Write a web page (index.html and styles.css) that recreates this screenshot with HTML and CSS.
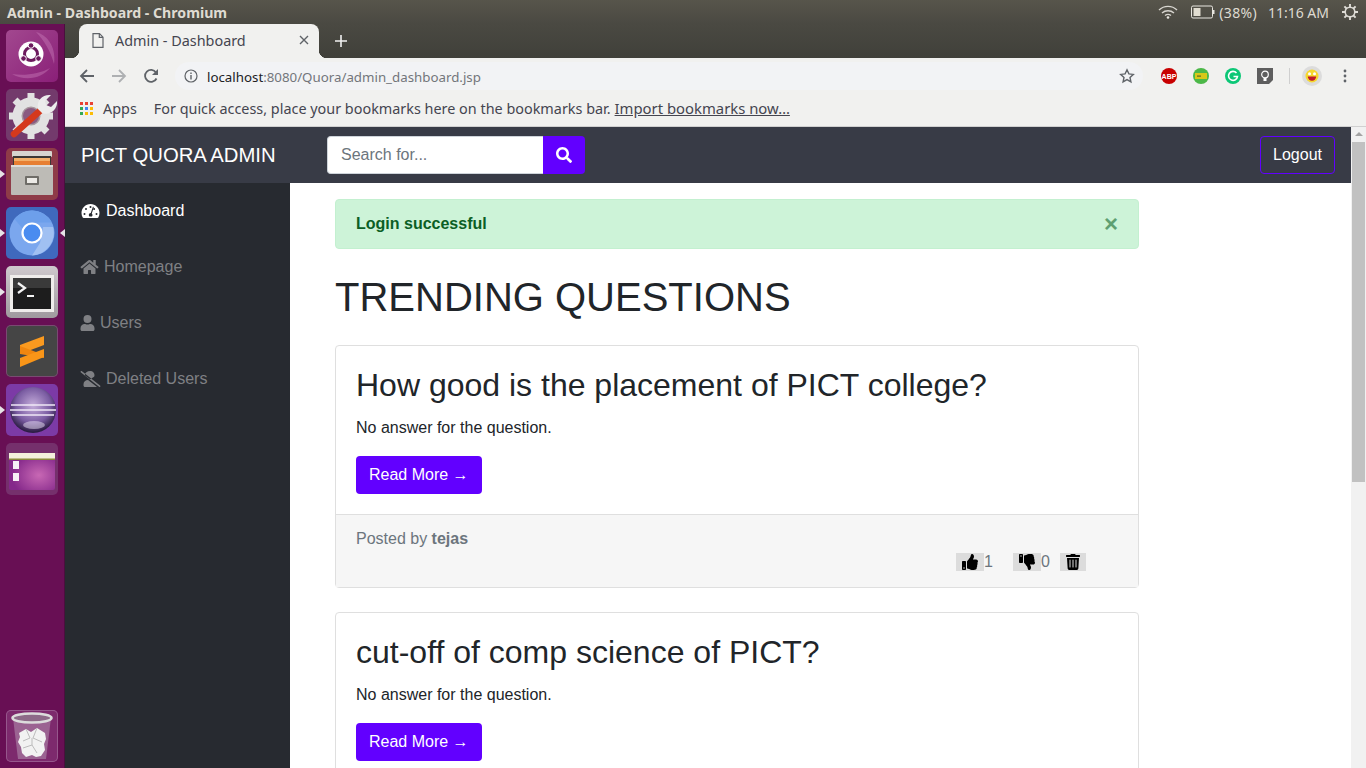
FILE: index.html
```html
<!DOCTYPE html>
<html lang="en">
<head>
    <meta charset="UTF-8">
    <title>Admin - Dashboard</title>
    <link rel="stylesheet" href="styles.css">
</head>
<body>
    <svg class="sprites" width="0" height="0">
        <symbol id="i-thumb-up" viewBox="0 0 512 512"><path id="thumb-shape" d="M104 224H24c-13.255 0-24 10.745-24 24v240c0 13.255 10.745 24 24 24h80c13.255 0 24-10.745 24-24V248c0-13.255-10.745-24-24-24zM64 472c-13.255 0-24-10.745-24-24s10.745-24 24-24 24 10.745 24 24-10.745 24-24 24zM384 81.452c0 42.416-25.97 66.208-33.277 94.548h101.723c33.397 0 59.397 27.746 59.553 58.098.084 17.938-7.546 37.249-19.439 49.197l-.11.11c9.836 23.337 8.237 56.037-9.308 79.469 8.681 25.895-.069 57.704-16.382 74.757 4.298 17.598 2.244 32.575-6.148 44.632C440.202 511.587 389.616 512 346.839 512l-2.845-.001c-48.287-.017-87.806-17.598-119.56-31.725-15.957-7.099-36.821-15.887-52.651-16.178-6.54-.12-11.783-5.457-11.783-11.998v-213.77c0-3.2 1.282-6.271 3.558-8.521 39.614-39.144 56.648-80.587 89.117-113.111 14.804-14.832 20.188-37.236 25.393-58.902C282.515 39.293 291.817 0 312 0c24 0 72 8 72 81.452z"/></symbol>
        <symbol id="i-thumb-down" viewBox="0 0 512 512"><use href="#thumb-shape" transform="matrix(1 0 0 -1 0 512)"/></symbol>
        <symbol id="i-trash" viewBox="0 0 448 512"><path d="M432 32H312l-9-19A24 24 0 0 0 281 0H167a24 24 0 0 0-22 13l-9 19H16C7 32 0 39 0 48v32c0 9 7 16 16 16h416c9 0 16-7 16-16V48c0-9-7-16-16-16zM53 467a48 48 0 0 0 48 45h246a48 48 0 0 0 48-45l21-339H32zm251-275a16 16 0 0 1 32 0v224a16 16 0 0 1-32 0zm-96 0a16 16 0 0 1 32 0v224a16 16 0 0 1-32 0zm-96 0a16 16 0 0 1 32 0v224a16 16 0 0 1-32 0z"/></symbol>
    </svg>

    <div class="system-bar">
        <span class="window-title">Admin - Dashboard - Chromium</span>
        <div class="tray">
            <svg class="tray-wifi" viewBox="0 0 20 14"><path d="M1 5a13 13 0 0 1 18 0M4 8a9 9 0 0 1 12 0M7 10.5a5 5 0 0 1 6 0" fill="none" stroke="#d8d6d0" stroke-width="1.4"/><circle cx="10" cy="12.5" r="1.3" fill="#e8e6e0"/></svg>
            <svg class="tray-battery" viewBox="0 0 24 14"><rect x=".5" y="1" width="21" height="12" rx="1.5" fill="none" stroke="#e8e6e0"/><rect x="2.5" y="3" width="7" height="8" fill="#e0dcd0"/><rect x="22" y="5" width="1.5" height="4" fill="#e8e6e0"/></svg>
            <span class="tray-percent">(38%)</span>
            <span class="tray-clock">11:16 AM</span>
            <svg class="tray-gear" viewBox="0 0 20 20"><circle cx="10" cy="10" r="6" fill="none" stroke="#dedcd6" stroke-width="2"/><path d="M10 0v5M10 15v5M0 10h5M15 10h5M3 3l3 3M14 14l3 3M17 3l-3 3M6 14l-3 3" stroke="#dedcd6" stroke-width="2.4"/></svg>
        </div>
    </div>

    <div class="desktop">
        <!-- launcher on the left -->
        <nav class="launcher">
            <div class="launcher-top">
                <div class="tile tile-ubuntu">
                    <svg viewBox="0 0 52 52"><path d="M30 2c14 4 20 18 18 32-3-12-10-24-18-32zM6 44c14 8 30 4 38-6-10 6-26 8-38 6z" fill="#c77ab8" opacity=".45"/><circle cx="25" cy="24" r="12.5" fill="#fff"/><circle cx="25" cy="24" r="6.5" fill="none" stroke="#6d1a5e" stroke-width="3"/><circle cx="25" cy="15.5" r="2.8" fill="#6d1a5e" stroke="#fff"/><circle cx="17.500" cy="28.500" r="2.8" fill="#6d1a5e" stroke="#fff"/><circle cx="32.500" cy="28.500" r="2.8" fill="#6d1a5e" stroke="#fff"/></svg>
                </div>
                <div class="tile tile-tools">
                    <svg viewBox="0 0 52 52"><circle cx="25" cy="27" r="14" fill="#a8989f" stroke="#e2e2e2" stroke-width="9"/><path d="M25 4v9M25 41v9M3 27h9M38 27h9M9 11l6 6M35 37l6 6M41 11l-6 6M15 37l-6 6" stroke="#e2e2e2" stroke-width="7"/><circle cx="25" cy="27" r="8" fill="#8a5a80"/><path d="M8 45 36 20" stroke="#d5391d" stroke-width="6.500" stroke-linecap="round"/><path d="M32 20c-2-9 5-15 13-14l-6 6 1 4 5 2 6-6c1 9-8 15-15 12z" fill="#ececec"/></svg>
                </div>
                <div class="tile tile-files has-pip">
                    <svg viewBox="0 0 52 52"><rect x="6" y="3" width="40" height="6" rx="1" fill="#d6d4cf"/><rect x="7" y="8" width="38" height="12" fill="#3b3835"/><rect x="8" y="10" width="36" height="3" fill="#f3b06a"/><rect x="8" y="13" width="36" height="4" fill="#e77f32"/><rect x="5" y="17" width="42" height="30" rx="1" fill="#bdbbb6"/><rect x="5" y="17" width="42" height="2" fill="#dedcd8"/><rect x="19" y="28" width="14" height="9" rx="1" fill="#6f6d68"/><rect x="21" y="30" width="10" height="5" fill="#eceae6"/></svg>
                </div>
                <div class="tile tile-chromium has-pip has-pip-right">
                    <svg viewBox="0 0 52 52"><circle cx="26" cy="26" r="22.5" fill="#7ba7ee"/><path d="M26 3.5A22.5 22.5 0 0 1 46 15.500H26a10.500 10.500 0 0 0-9.500 6L8.500 12A22.5 22.5 0 0 1 26 3.500z" fill="#6d9feb"/><path d="M34 36 26 48.500A22.500 22.500 0 0 0 47 20H37z" fill="#a0c0f2"/><circle cx="26" cy="26" r="9.500" fill="#4a8cf0" stroke="#fff" stroke-width="2.200"/></svg>
                </div>
                <div class="tile tile-terminal has-pip">
                    <svg viewBox="0 0 52 52"><rect x="4" y="9" width="44" height="37" fill="#efedeb"/><rect x="7" y="12" width="38" height="31" fill="#1d1d1d"/><rect x="7" y="12" width="38" height="10" fill="#3a3a3a"/><path d="M12 17l7 5-7 5" fill="none" stroke="#f4f4f4" stroke-width="2.200"/><rect x="21" y="29" width="7" height="2" fill="#f4f4f4"/></svg>
                </div>
                <div class="tile tile-sublime">
                    <svg viewBox="0 0 52 52"><path d="M38 11 14 20v9l24-9z" fill="#fb9a1f"/><path d="M14 21l24 9v3L14 29z" fill="#f0860f"/><path d="M38 24v8L14 42v-9z" fill="#f99518"/></svg>
                </div>
                <div class="tile tile-eclipse has-pip">
                    <svg viewBox="0 0 52 52"><defs><radialGradient id="orb" cx="50%" cy="40%" r="58%"><stop offset="0" stop-color="#c4acda"/><stop offset=".65" stop-color="#7a5ca2"/><stop offset="1" stop-color="#2c1d44"/></radialGradient></defs><circle cx="27" cy="26" r="23" fill="url(#orb)"/><path d="M5 21h44M4 26h46M6 31h42" stroke="#efe8f6" stroke-width="1.600"/><ellipse cx="28" cy="41" rx="11" ry="4" fill="#e8dff2" opacity=".5"/></svg>
                </div>
                <div class="tile tile-window">
                    <svg viewBox="0 0 52 52"><defs><radialGradient id="glow" cx="65%" cy="60%" r="60%"><stop offset="0" stop-color="#c868b4"/><stop offset="1" stop-color="#84288a"/></radialGradient></defs><rect x="3" y="10" width="46" height="37" rx="2" fill="url(#glow)"/><rect x="3" y="10" width="46" height="6" fill="#f4f1dc"/><rect x="3" y="15.500" width="46" height="1.500" fill="#8a8a3a"/><rect x="7" y="18" width="6" height="8" fill="#f6eff6"/><rect x="7" y="30" width="6" height="8" fill="#f6eff6"/></svg>
                </div>
            </div>
            <div class="tile tile-trash">
                <svg viewBox="0 0 52 52"><path d="M7 8 12 49h28l5-41z" fill="#b591b0" opacity=".55"/><ellipse cx="26" cy="8" rx="19.500" ry="4.500" fill="#8d6a88" stroke="#dcdcdc" stroke-width="2.600"/><path d="M13 23l7-4 5 3 6-4 8 5 1 6-2 5 1 6-4 6-5 1-4-2-6 2-4-4-1-6-3-5 2-5z" fill="#f2f2f2"/><path d="M20 19l4 9-7 3M31 18l-4 10 9 4M17 38l9-3 5 8M26 28v7" fill="none" stroke="#bcbcbc" stroke-width="1"/></svg>
            </div>
        </nav>

        <div class="browser">
            <div class="tab-strip">
                <div class="tab">
                    <svg class="tab-file" viewBox="0 0 12 15"><path d="M1 .7h6.500L11 4.200v10.100H1zM7.300 .7v3.700H11" fill="none" stroke="#5f6368" stroke-width="1.200"/></svg>
                    <span class="tab-title">Admin - Dashboard</span>
                    <svg class="tab-close" viewBox="0 0 10 10"><path d="M1 1l8 8M9 1l-8 8" stroke="#5f6368" stroke-width="1.400"/></svg>
                </div>
                <svg class="new-tab" viewBox="0 0 12 12"><path d="M6 0v12M0 6h12" stroke="#f1f1f1" stroke-width="1.600"/></svg>
            </div>

            <div class="toolbar">
                <svg class="tool-icon" viewBox="0 0 16 16"><path d="M15 8H2M8 2 2 8l6 6" fill="none" stroke="#5f6368" stroke-width="1.800"/></svg>
                <svg class="tool-icon" viewBox="0 0 16 16"><path d="M1 8h13M8 2l6 6-6 6" fill="none" stroke="#aeb0b2" stroke-width="1.800"/></svg>
                <svg class="tool-icon tool-reload" viewBox="0 0 16 16"><path d="M13.500 10.500A6 6 0 1 1 13 4.500" fill="none" stroke="#5f6368" stroke-width="1.800"/><path d="M15 1v6H9z" fill="#5f6368"/></svg>
                <div class="omnibox">
                    <svg class="info-icon" viewBox="0 0 14 14"><circle cx="7" cy="7" r="6" fill="none" stroke="#5f6368" stroke-width="1.200"/><path d="M7 6v4.500M7 3.500v1.500" stroke="#5f6368" stroke-width="1.400"/></svg>
                    <span class="url"><span class="url-host">localhost</span>:8080/Quora/admin_dashboard.jsp</span>
                    <svg class="star" viewBox="0 0 16 16"><path d="M8 1.800l1.900 4.100 4.400.5-3.300 3 .9 4.400L8 11.600l-3.900 2.200.9-4.400-3.300-3 4.400-.5z" fill="none" stroke="#5f6368" stroke-width="1.400"/></svg>
                </div>
                <div class="extensions">
                    <svg class="ext" viewBox="0 0 16 16"><circle cx="8" cy="8" r="8" fill="#c80000"/><text x="8" y="10.500" class="ext-abp">ABP</text></svg>
                    <svg class="ext" viewBox="0 0 16 16"><circle cx="8" cy="8" r="8" fill="#4cb848"/><rect x="2" y="5" width="12" height="6" fill="#d8c818"/><rect x="4" y="7.500" width="4" height="1.200" fill="#5a6a20"/></svg>
                    <svg class="ext" viewBox="0 0 16 16"><circle cx="8" cy="8" r="8" fill="#0cc776"/><path d="M11.500 5A4.500 4.500 0 1 0 12.500 8.500H8.500" fill="none" stroke="#fff" stroke-width="1.600"/></svg>
                    <svg class="ext" viewBox="0 0 16 16"><path d="M0 0h16v12l-4 4H0z" fill="#5e5e5e"/><circle cx="8" cy="6.500" r="3.300" fill="none" stroke="#fff" stroke-width="1.200"/><rect x="6.500" y="10" width="3" height="3" fill="#fff"/></svg>
                    <span class="ext-sep"></span>
                    <span class="avatar">
                        <svg viewBox="0 0 14 14"><circle cx="7" cy="7" r="6.500" fill="#f6d82e"/><circle cx="4.500" cy="4.800" r="1.500" fill="#fff"/><circle cx="9.500" cy="4.800" r="1.500" fill="#fff"/><path d="M2.800 7.500h8.400A4.200 4.200 0 0 1 2.800 7.500z" fill="#c01a2a"/></svg>
                    </span>
                    <svg class="menu-dots" viewBox="0 0 4 14"><circle cx="2" cy="2" r="1.400" fill="#5f6368"/><circle cx="2" cy="7" r="1.400" fill="#5f6368"/><circle cx="2" cy="12" r="1.400" fill="#5f6368"/></svg>
                </div>
            </div>

            <div class="bookmarks">
                <svg class="apps-icon" viewBox="0 0 13 13"><rect width="3" height="3" fill="#e94235"/><rect x="5" width="3" height="3" fill="#e94235"/><rect x="10" width="3" height="3" fill="#e94235"/><rect y="5" width="3" height="3" fill="#34a853"/><rect x="5" y="5" width="3" height="3" fill="#4285f4"/><rect x="10" y="5" width="3" height="3" fill="#fbbc05"/><rect y="10" width="3" height="3" fill="#34a853"/><rect x="5" y="10" width="3" height="3" fill="#fbbc05"/><rect x="10" y="10" width="3" height="3" fill="#fbbc05"/></svg>
                <span class="apps-label">Apps</span>
                <span class="bookmarks-hint">For quick access, place your bookmarks here on the bookmarks bar.</span>
                <a class="bookmarks-import" href="#">Import bookmarks now…</a>
            </div>

            <div class="viewport">
                <div class="page">
                    <header class="navbar">
                        <a class="brand" href="#">PICT QUORA ADMIN</a>
                        <form class="search">
                            <input class="search-input" type="text" placeholder="Search for...">
                            <button class="search-btn" type="button">
                                <svg viewBox="0 0 512 512"><path d="M505 442.700 405.300 343c-4.500-4.500-10.600-7-17-7H372c27.600-35.300 44-79.700 44-128C416 93.100 322.900 0 208 0S0 93.100 0 208s93.100 208 208 208c48.300 0 92.700-16.400 128-44v16.300c0 6.400 2.500 12.500 7 17l99.700 99.700c9.400 9.400 24.600 9.400 33.900 0l28.300-28.300c9.400-9.400 9.400-24.600.1-34zM208 336c-70.700 0-128-57.200-128-128 0-70.700 57.200-128 128-128 70.700 0 128 57.200 128 128 0 70.700-57.200 128-128 128z"/></svg>
                            </button>
                        </form>
                        <a class="logout" href="#">Logout</a>
                    </header>

                    <div class="layout">
                        <aside class="sidebar">
                            <a class="side-link active" href="#">
                                <svg viewBox="0 0 576 512"><path d="M288 32C129 32 0 161 0 320c0 53 14 102 39 144 6 10 16 16 28 16h442c12 0 22-6 28-16 25-42 39-91 39-144C576 161 447 32 288 32zm0 64a32 32 0 1 1 0 64 32 32 0 0 1 0-64zM96 384a32 32 0 1 1 0-64 32 32 0 0 1 0 64zm48-160a32 32 0 1 1 0-64 32 32 0 0 1 0 64zm246-72-61 184c14 11 23 29 23 48 0 17-7 33-18 45H252c-11-12-18-28-18-45 0-35 28-64 63-64l62-187c3-9 12-14 21-11 9 3 14 12 11 21zm14 72a32 32 0 1 1 32-32c0 0 0 0 0 0a32 32 0 0 1-32 32zm76 160a32 32 0 1 1 0-64 32 32 0 0 1 0 64z"/></svg>
                                Dashboard
                            </a>
                            <a class="side-link" href="#">
                                <svg class="icon-home" viewBox="0 0 576 512"><path d="M280 148 96 300v164c0 9 7 16 16 16l112-1c9 0 16-7 16-16v-95c0-9 7-16 16-16h64c9 0 16 7 16 16v95c0 9 7 16 16 16l112 1c9 0 16-7 16-16V300L296 148c-4-4-12-4-16 0zm291 103-83-69V44c0-7-5-12-12-12h-56c-7 0-12 5-12 12v72l-90-74a48 48 0 0 0-61 0L5 251c-5 4-6 12-2 17l26 31c4 5 12 6 17 2L280 108c4-4 12-4 16 0l235 193c5 4 13 3 17-2l25-31c4-5 3-13-2-17z"/></svg>
                                Homepage
                            </a>
                            <a class="side-link" href="#">
                                <svg class="icon-user" viewBox="0 0 448 512"><path d="M224 256a128 128 0 1 0 0-256 128 128 0 0 0 0 256zm90 32h-17a174 174 0 0 1-146 0h-17C60 288 0 348 0 422v42c0 27 21 48 48 48h352c27 0 48-21 48-48v-42c0-74-60-134-134-134z"/></svg>
                                Users
                            </a>
                            <a class="side-link" href="#">
                                <svg viewBox="0 0 640 512"><path d="M633 471 36 3a16 16 0 0 0-23 3L3 18c-5 7-4 17 3 23l597 468c7 5 17 4 23-3l10-13c5-7 4-16-3-22zM320 256c-12 0-23-2-34-6L141 137c2-76 65-137 179-137 71 0 128 57 128 128 0 20-5 39-13 56zM96 422v42c0 27 21 48 48 48h352c9 0 18-3 25-7L241 288c-81 0-145 60-145 134z"/></svg>
                                Deleted Users
                            </a>
                        </aside>

                        <main class="content">
                            <div class="alert">
                                <strong>Login successful</strong>
                                <span class="alert-close">×</span>
                            </div>
                            <h1 class="page-title">TRENDING QUESTIONS</h1>

                            <article class="card">
                                <div class="card-body">
                                    <h2 class="card-title">How good is the placement of PICT college?</h2>
                                    <p class="card-text">No answer for the question.</p>
                                    <a class="read-more" href="#">Read More →</a>
                                </div>
                                <div class="card-footer">
                                    <div class="posted">Posted by <b>tejas</b></div>
                                    <div class="votes">
                                        <span class="vote"><svg><use href="#i-thumb-up"/></svg></span><span class="count">1</span>
                                        <span class="vote vote-down"><svg><use href="#i-thumb-down"/></svg></span><span class="count">0</span>
                                        <span class="vote vote-trash"><svg><use href="#i-trash"/></svg></span>
                                    </div>
                                </div>
                            </article>

                            <article class="card">
                                <div class="card-body">
                                    <h2 class="card-title">cut-off of comp science of PICT?</h2>
                                    <p class="card-text">No answer for the question.</p>
                                    <a class="read-more" href="#">Read More →</a>
                                </div>
                            </article>
                        </main>
                    </div>
                </div>

                <div class="scrollbar">
                    <span class="scroll-arrow"></span>
                    <span class="scroll-thumb"></span>
                </div>
            </div>
        </div>
    </div>
</body>
</html>
```

FILE: styles.css
```css
* {
    box-sizing: border-box;
}

html, body {
    margin: 0;
    padding: 0;
    height: 768px;
    overflow: hidden;
}

body {
    display: flex;
    flex-direction: column;
    font-family: "Liberation Sans", Arial, sans-serif;
    font-size: 16px;
    color: #212529;
    background-color: #3c3b37;
}

a {
    text-decoration: none;
}

.sprites {
    position: absolute;
}

/* Ubuntu top panel */
.system-bar {
    height: 24px;
    flex: none;
    display: flex;
    align-items: center;
    justify-content: space-between;
    padding: 0 0 0 7px;
    background: linear-gradient(#57554b, #4a4942);
    color: #dfdbd2;
}

.window-title {
    font-family: "Noto Sans", sans-serif;
    font-weight: 700;
    font-size: 14.15px;
}

.tray {
    display: flex;
    align-items: center;
    font-family: "Noto Sans", sans-serif;
    font-size: 14px;
}

.tray-wifi {
    width: 20px;
    height: 14px;
    margin-right: 13px;
}

.tray-battery {
    width: 24px;
    height: 14px;
    margin-right: 4px;
}

.tray-percent {
    margin-right: 11px;
    letter-spacing: .3px;
}

.tray-clock {
    margin-right: 13px;
}

.tray-gear {
    width: 16px;
    height: 16px;
    margin-right: 8px;
}

.desktop {
    flex: 1;
    display: flex;
    min-height: 0;
}

/* Launcher */
.launcher {
    width: 65px;
    flex: none;
    display: flex;
    flex-direction: column;
    justify-content: space-between;
    padding: 6px 7px 6px 6px;
    background-color: #680f54;
    border-right: 1px solid #4a0f3e;
}

.launcher-top {
    display: flex;
    flex-direction: column;
    gap: 7px;
}

.tile {
    position: relative;
    width: 52px;
    height: 52px;
    border-radius: 5px;
}

.tile svg {
    display: block;
    width: 52px;
    height: 52px;
}

.has-pip::before {
    content: "";
    position: absolute;
    left: -6px;
    top: 22px;
    border-left: 5px solid #e6e3e6;
    border-top: 4px solid transparent;
    border-bottom: 4px solid transparent;
}

.has-pip-right::after {
    content: "";
    position: absolute;
    right: -7px;
    top: 22px;
    border-right: 5px solid #e6e3e6;
    border-top: 4px solid transparent;
    border-bottom: 4px solid transparent;
}

.tile-ubuntu { background: linear-gradient(135deg, #a2488f, #8a1f78); }
.tile-tools { background-color: #733a6c; }
.tile-files { background-color: #8e3b48; }
.tile-chromium { background-color: #3f69bd; }
.tile-terminal { background: linear-gradient(#cfc9cd, #9f9a9e); }
.tile-sublime { background-color: #454545; box-shadow: inset 0 0 0 1px #7a4a72; }
.tile-eclipse { background-color: #7c3aa6; }
.tile-window { background-color: #75306c; }
.tile-trash { background-color: #7d2a6d; box-shadow: inset 0 0 0 1px #96578c; }

/* Browser chrome */
.browser {
    flex: 1;
    min-width: 0;
    display: flex;
    flex-direction: column;
}

.tab-strip {
    height: 34px;
    flex: none;
    display: flex;
    align-items: flex-end;
    padding-left: 14px;
    background: linear-gradient(#4a4942, #40403a);
}

.tab {
    position: relative;
    width: 240px;
    height: 34px;
    display: flex;
    align-items: center;
    padding: 0 10px 2px 13px;
    background-color: #f1f1ef;
    border-radius: 8px 8px 0 0;
}

/* flared bottom corners of the active tab */
.tab::before,
.tab::after {
    content: "";
    position: absolute;
    bottom: 0;
    width: 8px;
    height: 8px;
    background: radial-gradient(circle at 0 0, transparent 8px, #f1f1ef 8.5px);
}

.tab::before {
    left: -8px;
}

.tab::after {
    right: -8px;
    background: radial-gradient(circle at 100% 0, transparent 8px, #f1f1ef 8.5px);
}

.tab-file {
    width: 12px;
    height: 15px;
    margin-right: 11px;
}

.tab-title {
    flex: 1;
    font-family: "Noto Sans", sans-serif;
    font-size: 14.4px;
    color: #45454f;
}

.tab-close {
    width: 10px;
    height: 10px;
}

.new-tab {
    width: 12px;
    height: 12px;
    margin: 0 0 11px 16px;
}

.toolbar {
    height: 36px;
    flex: none;
    display: flex;
    align-items: center;
    padding-left: 14px;
    background-color: #f1f1ef;
}

.tool-icon {
    width: 16px;
    height: 16px;
    margin-right: 16px;
}

.tool-reload {
    margin-right: 0;
}

.omnibox {
    width: 968px;
    height: 28px;
    margin-left: 16px;
    display: flex;
    align-items: center;
    padding: 0 8px 0 9px;
    border-radius: 14px;
    background-color: #f2f3f5;
}

.info-icon {
    width: 14px;
    height: 14px;
    margin-right: 9px;
}

.url {
    flex: 1;
    padding-top: 1px;
    font-family: "Noto Sans", sans-serif;
    font-size: 13.3px;
    color: #72767b;
}

.url-host {
    color: #202124;
}

.star {
    width: 16px;
    height: 16px;
}

.extensions {
    display: flex;
    align-items: center;
    margin-left: 18px;
}

.ext {
    width: 16px;
    height: 16px;
    margin-right: 16px;
}

.ext-abp {
    font-family: "Liberation Sans", sans-serif;
    font-size: 7px;
    font-weight: 700;
    fill: #fff;
    text-anchor: middle;
}

.ext-sep {
    width: 1px;
    height: 16px;
    margin-right: 12px;
    background-color: #cfcfcf;
}

.avatar {
    width: 20px;
    height: 20px;
    display: flex;
    align-items: center;
    justify-content: center;
    margin-right: 21px;
    border-radius: 50%;
    background-color: #dcdcdc;
}

.avatar svg {
    width: 14px;
    height: 14px;
}

.menu-dots {
    width: 4px;
    height: 14px;
}

.bookmarks {
    height: 33px;
    flex: none;
    display: flex;
    align-items: center;
    padding: 0 0 4px 15px;
    background-color: #f1f1ef;
    border-bottom: 1px solid #d0d0d0;
    font-family: "Noto Sans", sans-serif;
    font-size: 14.4px;
    color: #45454f;
}

.apps-icon {
    width: 13px;
    height: 13px;
    margin-right: 10px;
}

.apps-label {
    margin-right: 17px;
}

.bookmarks-import {
    margin-left: 4px;
    font-size: 14.85px;
    color: #45454f;
    text-decoration: underline;
}

/* Page area */
.viewport {
    flex: 1;
    min-height: 0;
    display: flex;
    background-color: #fff;
}

.page {
    flex: 1;
    min-width: 0;
    display: flex;
    flex-direction: column;
}

.scrollbar {
    width: 15px;
    flex: none;
    display: flex;
    flex-direction: column;
    align-items: center;
    background-color: #f1f1f1;
}

.scroll-arrow {
    margin-top: 5px;
    border-bottom: 4px solid #a3a3a3;
    border-left: 4px solid transparent;
    border-right: 4px solid transparent;
}

.scroll-thumb {
    width: 13px;
    height: 340px;
    margin-top: 6px;
    background-color: #c1c1c1;
}

.navbar {
    height: 56px;
    flex: none;
    display: flex;
    align-items: center;
    padding-right: 16px;
    background-color: #383b46;
}

.brand {
    width: 262px;
    padding-left: 16px;
    font-size: 20.3px;
    color: #fff;
}

.search {
    display: flex;
    height: 38px;
}

.search-input {
    width: 216px;
    height: 38px;
    padding: 6px 13px;
    border: 1px solid #ced4da;
    border-right: none;
    border-radius: 4px 0 0 4px;
    font-family: inherit;
    font-size: 16px;
    background-color: #fff;
}

.search-input::placeholder {
    color: #6c757d;
}

.search-btn {
    width: 42px;
    height: 38px;
    display: flex;
    align-items: center;
    justify-content: center;
    padding: 0;
    border: none;
    border-radius: 0 4px 4px 0;
    background-color: #6200ff;
}

.search-btn svg {
    width: 16px;
    height: 16px;
    fill: #fff;
}

.logout {
    margin-left: auto;
    height: 38px;
    padding: 0 12px;
    display: flex;
    align-items: center;
    border: 1px solid #6200ff;
    border-radius: 4px;
    color: #fff;
}

.layout {
    flex: 1;
    min-height: 0;
    display: flex;
}

.sidebar {
    width: 225px;
    flex: none;
    background-color: #272a30;
}

.side-link {
    height: 56px;
    display: flex;
    align-items: center;
    gap: 5px;
    padding-left: 15px;
    color: #7f8084;
}

.side-link svg {
    width: 21px;
    height: 16px;
    fill: currentColor;
}

.side-link .icon-home {
    width: 19px;
}

.side-link .icon-user {
    width: 15px;
}

.side-link.active {
    color: #fff;
}

.content {
    flex: 1;
    min-width: 0;
    padding: 16px 212px 0 45px;
    overflow: hidden;
}

.alert {
    height: 50px;
    display: flex;
    align-items: center;
    justify-content: space-between;
    padding: 0 20px;
    margin-bottom: 24px;
    border: 1px solid #c3f0d0;
    border-radius: 4px;
    background-color: #cdf3d8;
    color: #0b5f25;
}

.alert-close {
    font-size: 24px;
    font-weight: 700;
    line-height: 1;
    color: #5f9f72;
}

.page-title {
    margin: 0 0 24px;
    font-size: 40px;
    font-weight: 400;
    line-height: 48px;
}

.card {
    margin-bottom: 24px;
    border: 1px solid #dfdfdf;
    border-radius: 4px;
    background-color: #fff;
}

.card-body {
    padding: 20px;
}

.card-title {
    margin: 0 0 12px;
    font-size: 32px;
    font-weight: 400;
    line-height: 38px;
}

.card-text {
    margin: 0 0 16px;
    line-height: 24px;
}

.read-more {
    display: inline-block;
    height: 38px;
    padding: 0 13px;
    line-height: 38px;
    border-radius: 4px;
    background-color: #6200ff;
    color: #fff;
}

.card-footer {
    height: 73px;
    padding: 12px 20px;
    border-top: 1px solid #dfdfdf;
    background-color: #f6f6f6;
    color: #6c757d;
}

.posted {
    line-height: 24px;
}

.votes {
    display: flex;
    align-items: center;
    height: 18px;
    margin: 2px 0 0 600px;
}

.vote {
    width: 28px;
    height: 18px;
    display: flex;
    align-items: center;
    justify-content: center;
    background-color: #dcdcdc;
}

.vote-down {
    margin-left: 20px;
}

.vote-trash {
    width: 26px;
    margin-left: 10px;
}

.vote svg {
    width: 16px;
    height: 16px;
    fill: #000;
}
```
